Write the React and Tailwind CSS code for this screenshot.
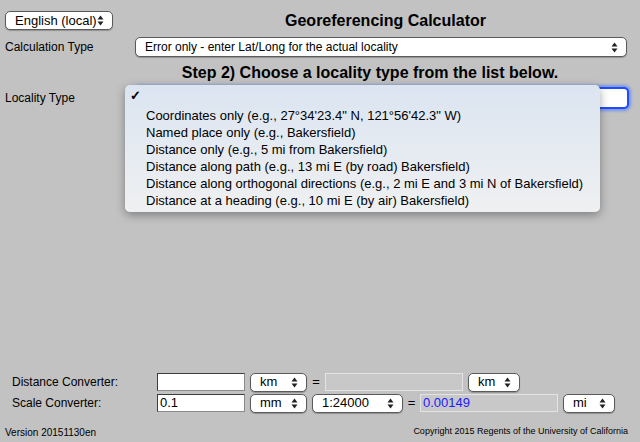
import React from "react";

function Arrows() {
  return (
    <svg width="7" height="11" viewBox="0 0 7 11" className="shrink-0">
      <path d="M3.5 0.5 L6.5 4.5 L0.5 4.5 Z" fill="#222" />
      <path d="M3.5 10.5 L6.5 6.5 L0.5 6.5 Z" fill="#222" />
    </svg>
  );
}

function Select({ value, className = "" }) {
  return (
    <div
      className={
        "flex items-center justify-between bg-white border border-[#5a5a5a] rounded-[5px] pl-[9px] pr-[8px] text-black shadow-[0_1px_1px_rgba(0,0,0,0.25)] " +
        className
      }
    >
      <span className="truncate">{value}</span>
      <Arrows />
    </div>
  );
}

function TextBox({ value = "", className = "" }) {
  return (
    <div
      className={
        "bg-white border border-[#8a8a8a] border-t-[#3c3c3c] border-l-[#3c3c3c] h-[18px] pl-[2px] text-[13px] leading-[16px] " +
        className
      }
    >
      {value}
    </div>
  );
}

const options = [
  'Coordinates only (e.g., 27°34\'23.4" N, 121°56\'42.3" W)',
  "Named place only (e.g., Bakersfield)",
  "Distance only (e.g., 5 mi from Bakersfield)",
  "Distance along path (e.g., 13 mi E (by road) Bakersfield)",
  "Distance along orthogonal directions (e.g., 2 mi E and 3 mi N of Bakersfield)",
  "Distance at a heading (e.g., 10 mi E (by air) Bakersfield)",
];

export default function App() {
  return (
    <div
      className="relative w-[640px] h-[442px] bg-[#c2c2c2] flex flex-col text-black overflow-hidden"
      style={{ fontFamily: '"Liberation Sans", Arial, sans-serif' }}
    >
      {/* HEADER */}
      <div className="flex items-center pt-[11px] pl-[5px] h-[30px]">
        <Select value="English (local)" className="w-[108px] h-[19px] text-[13px]" />
        <div className="flex-1 text-center text-[16px] leading-[19px] font-bold pl-[18px]">
          Georeferencing Calculator
        </div>
      </div>

      {/* CALCULATION TYPE */}
      <div className="flex items-center mt-[7px] pl-[5px]">
        <div className="w-[130px] text-[12px]">Calculation Type</div>
        <Select
          value="Error only - enter Lat/Long for the actual locality"
          className="w-[492px] h-[20px] text-[12px]"
        />
      </div>

      <div className="text-center text-[16px] font-bold mt-[7px] pl-[100px] leading-[18px]">
        Step 2) Choose a locality type from the list below.
      </div>

      {/* LOCALITY TYPE */}
      <div className="flex items-center mt-[5px] pl-[5px]">
        <div className="w-[130px] text-[12px]">Locality Type</div>
        <div className="w-[494px] h-[22px] bg-white rounded-[5px] border-2 border-[#1f4cff] shadow-[0_0_3px_2px_rgba(70,120,255,0.6)]" />
      </div>

      {/* POPUP */}
      <div className="absolute left-[125px] top-[85px] w-[475px] h-[127px] rounded-[5px] bg-gradient-to-b from-[#dbe5f1] to-[#eff0f1] shadow-[0_3px_10px_rgba(0,0,0,0.35)] text-[13px]">
        <div className="pl-[5px] pt-[2px] h-[19px] leading-[17px] font-bold">✓</div>
        <div className="mt-[3px]">
          {options.map((o) => (
            <div key={o} className="pl-[21px] h-[17px] leading-[17px] whitespace-nowrap">
              {o}
            </div>
          ))}
        </div>
      </div>

      <div className="flex-1" />

      {/* CONVERTERS */}
      <div className="flex flex-col gap-[3px]">
        <div className="flex items-center h-[18px]">
          <div className="w-[157px] pl-[12px] text-[12px]">Distance Converter:</div>
          <TextBox className="w-[88px]" />
          <Select value="km" className="w-[57px] h-[19px] ml-[5px] text-[13px]" />
          <div className="w-[18px] text-center text-[13px]">=</div>
          <div className="w-[138px] h-[18px] bg-[#c8c8c8] border border-[#e4e4e4]" />
          <Select value="km" className="w-[52px] h-[19px] ml-[5px] text-[13px]" />
        </div>
        <div className="flex items-center h-[18px]">
          <div className="w-[157px] pl-[12px] text-[12px]">Scale Converter:</div>
          <TextBox value="0.1" className="w-[88px]" />
          <Select value="mm" className="w-[57px] h-[19px] ml-[5px] text-[13px]" />
          <Select value="1:24000" className="w-[91px] h-[19px] ml-[5px] text-[13px]" />
          <div className="w-[17px] text-center text-[13px]">=</div>
          <div className="w-[138px] h-[18px] bg-[#c8c8c8] border border-[#e4e4e4] text-[13px] text-[#1a1aff] pl-[2px] leading-[16px]">
            0.00149
          </div>
          <Select value="mi" className="w-[52px] h-[19px] ml-[5px] text-[13px]" />
        </div>
      </div>

      {/* FOOTER */}
      <div className="flex justify-between items-center mt-[14px] mb-[4px] pl-[5px] pr-[12px] h-[12px]">
        <span className="text-[10px]">Version 20151130en</span>
        <span className="text-[9px]">Copyright 2015 Regents of the University of California</span>
      </div>
    </div>
  );
}
